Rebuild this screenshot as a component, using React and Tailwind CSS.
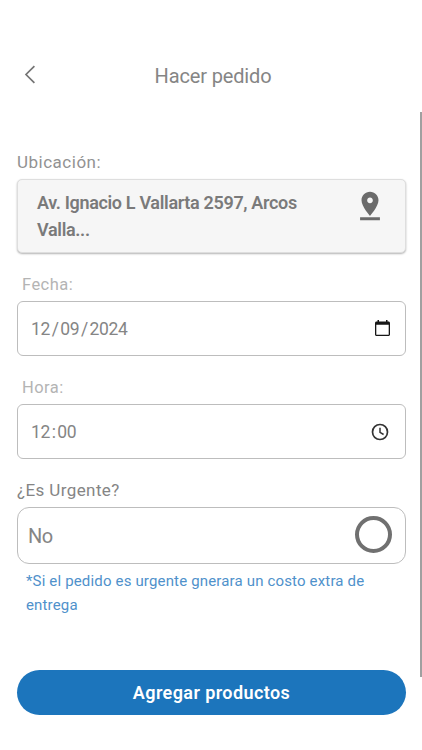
import { MdPinDrop } from 'react-icons/md'

function BackIcon() {
  return (
    <svg width="12" height="19" viewBox="0 0 12 19" fill="none" stroke="#757575" strokeWidth="1.7">
      <path d="M10.4 1.2 2 9.5l8.4 8.3" />
    </svg>
  )
}

function CalendarIcon() {
  return (
    <svg width="15" height="16" viewBox="0 0 15 16" fill="#161616" className="mb-px">
      <path d="M13.5 1.5h-1V0H11v1.5H4V0H2.5v1.5h-1C.7 1.5 0 2.2 0 3v11.5c0 .8.7 1.5 1.5 1.5h12c.8 0 1.5-.7 1.5-1.5V3c0-.8-.7-1.5-1.5-1.5zm.2 13.2H1.3V4.8h12.4v9.9z" />
    </svg>
  )
}

function ClockIcon() {
  return (
    <svg width="18" height="18" viewBox="0 0 18 18" fill="none" stroke="#333333" className="mr-px">
      <circle cx="9" cy="9" r="7.5" strokeWidth="1.7" />
      <path d="M9 4.8v4.6l3.6 2.1" strokeWidth="1.5" />
    </svg>
  )
}

function Field({ label, parts, separator, icon }) {
  return (
    <div>
      <p className="h-[27px] pl-[5px] pt-px text-[16.5px] leading-[20px] tracking-[0.45px] text-[#b4b4b4]">{label}</p>
      <div className="flex h-[55px] items-center justify-between rounded-[6px] border border-[#bdbdbd] pl-[13px] pr-[15px]">
        <span className="pt-[2px] text-[17.5px] tracking-[-0.4px] text-[#858585]">
          {parts.map((part, i) => (
            <span key={i}>
              {i > 0 && <span className="px-[1.8px]">{separator}</span>}
              {part}
            </span>
          ))}
        </span>
        {icon}
      </div>
    </div>
  )
}

export default function App() {
  return (
    <div className="relative h-[750px] w-full overflow-hidden bg-white font-['Roboto',sans-serif]">
      {/* Header */}
      <header className="grid h-[152px] grid-cols-[40px_1fr_36px] items-start px-[15px] pt-[62px]">
        <button className="flex h-[24px] items-center pl-[9px]"><BackIcon /></button>
        <h1 className="text-center text-[20px] leading-[28px] tracking-[-0.15px] text-[#858585]">Hacer pedido</h1>
      </header>

      <main className="pl-[17px] pr-[16px]">
        {/* Location */}
        <p className="h-[27px] text-[17px] leading-[21px] tracking-[0.5px] text-[#929292]">Ubicación:</p>
        <div className="flex h-[74px] items-start justify-between rounded-[5px] border border-[#dedede] bg-[#f6f6f6] pl-[19px] pr-[18px] shadow-[0_1px_2px_rgba(0,0,0,0.3)]">
          <p className="w-[275px] pt-[9px] text-[18px] font-semibold leading-[27px] tracking-[-0.33px] text-[#7a7a7a]">
            Av. Ignacio L Vallarta 2597, Arcos Valla...
          </p>
          <MdPinDrop size={34} className="mt-[8.5px] text-[#6b6b6b]" />
        </div>

        {/* Schedule */}
        <div className="mt-[21px] flex flex-col gap-[21px]">
          <Field label="Fecha:" parts={['12', '09', '2024']} separator="/" icon={<CalendarIcon />} />
          <Field label="Hora:" parts={['12', '00']} separator=":" icon={<ClockIcon />} />
        </div>

        {/* Urgent */}
        <p className="mt-[21px] h-[27px] text-[17px] leading-[21px] tracking-[0.4px] text-[#858585]">¿Es Urgente?</p>
        <div className="flex h-[57px] items-center justify-between rounded-[12px] border border-[#bdbdbd] pl-[10px] pr-[13px]">
          <span className="text-[20px] tracking-[-0.5px] text-[#858585]">No</span>
          <span className="mb-[2px] h-[37px] w-[37px] rounded-full border-[4px] border-[#707070]" />
        </div>
        <p className="w-[365px] pl-[9px] pt-[5px] text-[15px] leading-[24px] tracking-[0.16px] text-[#4f91cb]">
          *Si el pedido es urgente gnerara un costo extra de entrega
        </p>

        <button className="mt-[53px] flex h-[45px] w-full items-center justify-center rounded-full bg-[#1c75bc] text-[18px] font-semibold tracking-[0.4px] text-white">
          Agregar productos
        </button>
      </main>

      {/* Scroll thumb */}
      <div className="absolute right-0 top-[112px] h-[565px] w-[2.5px] bg-[#a0a0a0]" />
    </div>
  )
}
